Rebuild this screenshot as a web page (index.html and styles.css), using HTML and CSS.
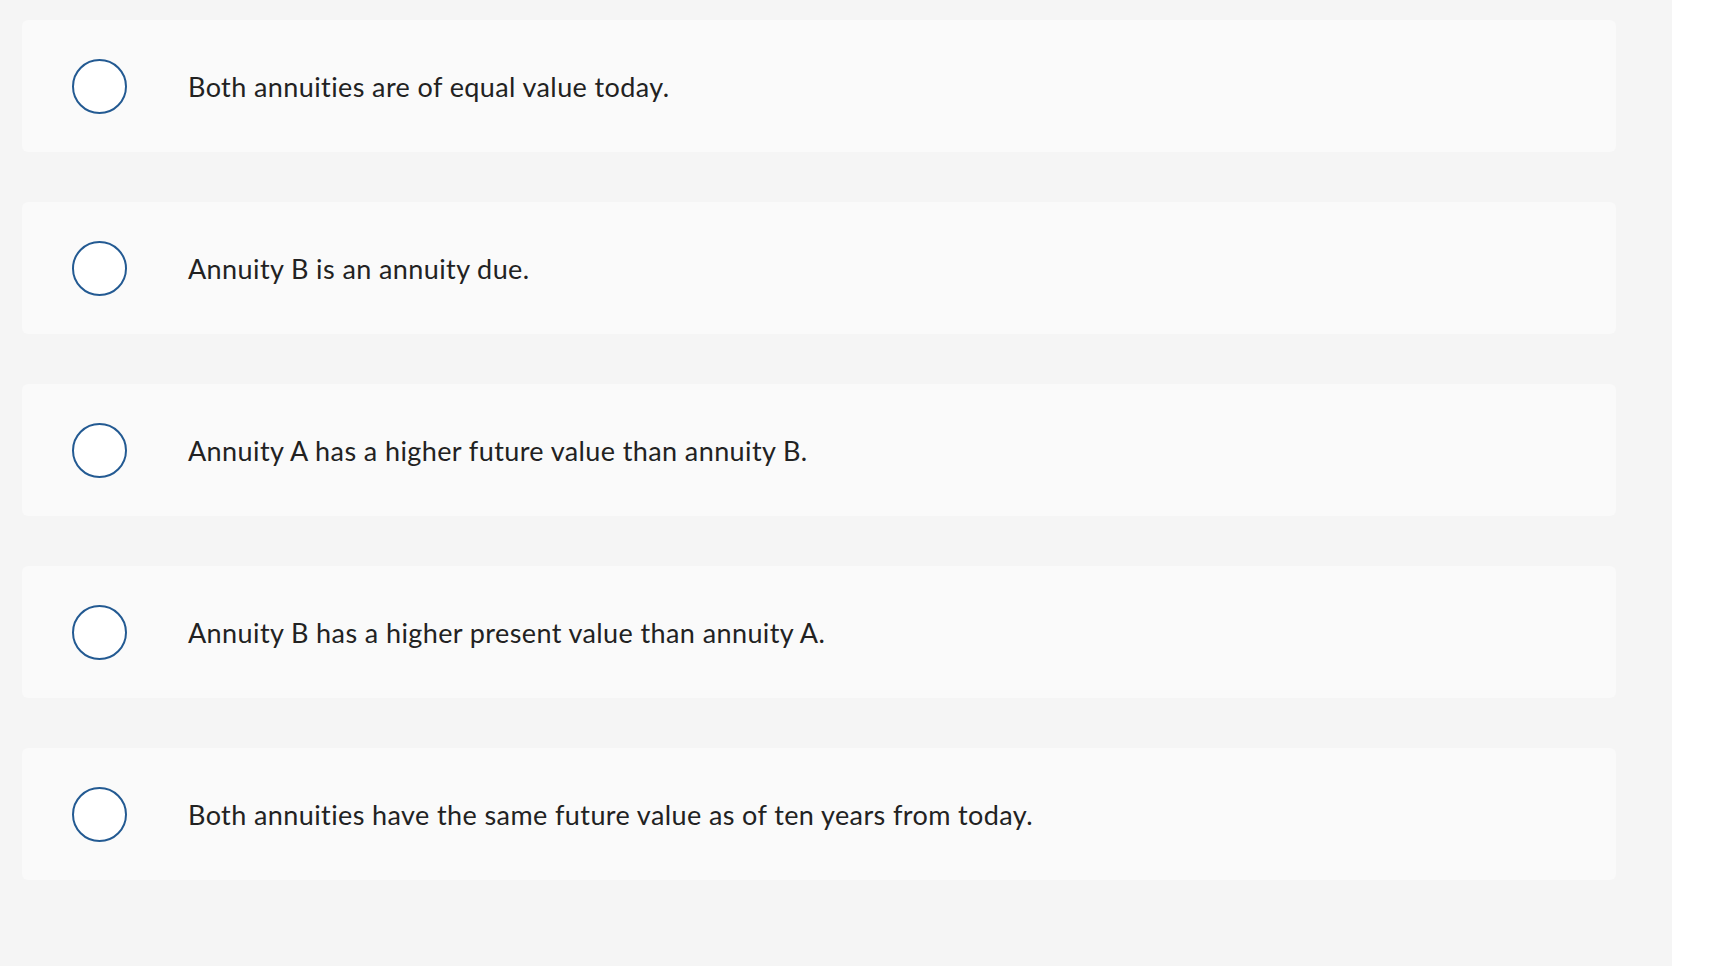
FILE: index.html
```html
<!DOCTYPE html>
<html lang="en">
<head>
    <meta charset="UTF-8">
    <meta name="viewport" content="width=device-width, initial-scale=1.0">
    <title>Question</title>
    <link rel="stylesheet" href="styles.css">
</head>
<body>
    <div class="question">
        <label class="choice">
            <span class="radio"></span>
            <span class="choice-text">Both annuities are of equal value today.</span>
        </label>
        <label class="choice">
            <span class="radio"></span>
            <span class="choice-text">Annuity B is an annuity due.</span>
        </label>
        <label class="choice">
            <span class="radio"></span>
            <span class="choice-text">Annuity A has a higher future value than annuity B.</span>
        </label>
        <label class="choice">
            <span class="radio"></span>
            <span class="choice-text">Annuity B has a higher present value than annuity A.</span>
        </label>
        <label class="choice">
            <span class="radio"></span>
            <span class="choice-text">Both annuities have the same future value as of ten years from today.</span>
        </label>
    </div>
</body>
</html>
```

FILE: styles.css
```css
body {
    margin: 0;
    background: #fff;
    font-family: Lato, 'Noto Sans', sans-serif;
}

.question {
    width: 1672px;
    min-height: 100vh;
    box-sizing: border-box;
    background: #f5f5f5;
    padding: 20px 56px 0 22px;
    display: flex;
    flex-direction: column;
    gap: 50px;
}

/* Answer rows */
.choice {
    height: 132px;
    background: #fafafa;
    border-radius: 6px;
    display: flex;
    align-items: center;
    padding-left: 50px;
    cursor: pointer;
}

.radio {
    width: 51px;
    height: 51px;
    border: 2px solid #235a92;
    border-radius: 50%;
    background: #fff;
    flex-shrink: 0;
}

.choice-text {
    margin-left: 61px;
    font-size: 27px;
    letter-spacing: 0.4px;
    font-variant-ligatures: none;
    color: #222;
}
```
